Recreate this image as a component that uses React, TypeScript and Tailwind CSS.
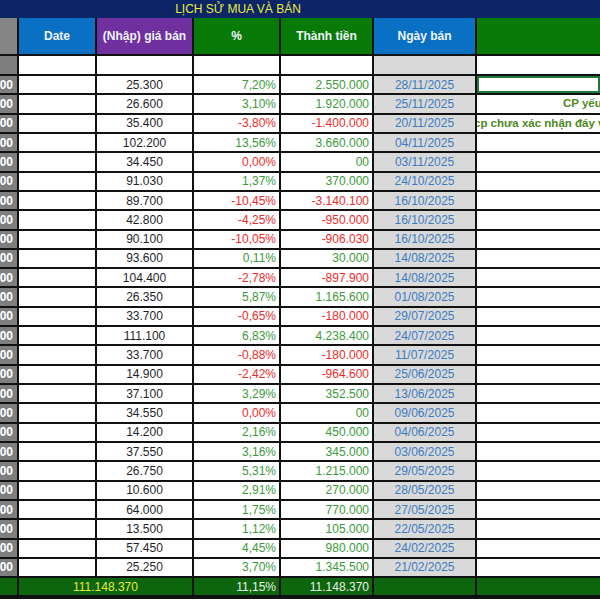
type Row = {
  a: string;
  price: string;
  pct: string;
  amount: string;
  date: string;
};

const ROWS: Row[] = [
  { a: "1.000", price: "25.300", pct: "7,20%", amount: "2.550.000", date: "28/11/2025" },
  { a: "2.000", price: "26.600", pct: "3,10%", amount: "1.920.000", date: "25/11/2025" },
  { a: "1.000", price: "35.400", pct: "-3,80%", amount: "-1.400.000", date: "20/11/2025" },
  { a: "1.000", price: "102.200", pct: "13,56%", amount: "3.660.000", date: "04/11/2025" },
  { a: "1.000", price: "34.450", pct: "0,00%", amount: "00", date: "03/11/2025" },
  { a: "1.000", price: "91.030", pct: "1,37%", amount: "370.000", date: "24/10/2025" },
  { a: "3.000", price: "89.700", pct: "-10,45%", amount: "-3.140.100", date: "16/10/2025" },
  { a: "1.000", price: "42.800", pct: "-4,25%", amount: "-950.000", date: "16/10/2025" },
  { a: "1.000", price: "90.100", pct: "-10,05%", amount: "-906.030", date: "16/10/2025" },
  { a: "1.000", price: "93.600", pct: "0,11%", amount: "30.000", date: "14/08/2025" },
  { a: "1.000", price: "104.400", pct: "-2,78%", amount: "-897.900", date: "14/08/2025" },
  { a: "1.000", price: "26.350", pct: "5,87%", amount: "1.165.600", date: "01/08/2025" },
  { a: "1.000", price: "33.700", pct: "-0,65%", amount: "-180.000", date: "29/07/2025" },
  { a: "1.000", price: "111.100", pct: "6,83%", amount: "4.238.400", date: "24/07/2025" },
  { a: "1.000", price: "33.700", pct: "-0,88%", amount: "-180.000", date: "11/07/2025" },
  { a: "1.000", price: "14.900", pct: "-2,42%", amount: "-964.600", date: "25/06/2025" },
  { a: "1.000", price: "37.100", pct: "3,29%", amount: "352.500", date: "13/06/2025" },
  { a: "1.000", price: "34.550", pct: "0,00%", amount: "00", date: "09/06/2025" },
  { a: "1.000", price: "14.200", pct: "2,16%", amount: "450.000", date: "04/06/2025" },
  { a: "1.000", price: "37.550", pct: "3,16%", amount: "345.000", date: "03/06/2025" },
  { a: "1.000", price: "26.750", pct: "5,31%", amount: "1.215.000", date: "29/05/2025" },
  { a: "1.000", price: "10.600", pct: "2,91%", amount: "270.000", date: "28/05/2025" },
  { a: "1.000", price: "64.000", pct: "1,75%", amount: "770.000", date: "27/05/2025" },
  { a: "1.000", price: "13.500", pct: "1,12%", amount: "105.000", date: "22/05/2025" },
  { a: "1.000", price: "57.450", pct: "4,45%", amount: "980.000", date: "24/02/2025" },
  { a: "1.000", price: "25.250", pct: "3,70%", amount: "1.345.500", date: "21/02/2025" },
];

const GRID = "grid grid-cols-[17px_76px_95px_85px_91px_101px_1fr] gap-x-[2px]";

// 0,00% shows red in the sheet, the matching "00" amount stays green
const isNeg = (v: string) => v.startsWith("-") || v === "0,00%";

const DataRow = ({ row, index }: { row: Row; index: number }) => (
  <div className={`${GRID} h-[17.32px] text-[12px] leading-none`}>
    <div className="flex items-center justify-end overflow-hidden whitespace-nowrap bg-[#7f7f7f] pr-[4px] font-bold text-white">
      {row.a}
    </div>
    <div className="bg-white" />
    <div className="flex items-center justify-center bg-white text-[#1f1f2a]">
      {row.price}
    </div>
    <div
      className={`flex items-center justify-end bg-white pr-[3px] ${
        isNeg(row.pct) ? "text-[#ee2b2b]" : "text-[#3c9a3c]"
      }`}
    >
      {row.pct}
    </div>
    <div
      className={`flex items-center justify-end bg-white pr-[3px] ${
        row.amount.startsWith("-") ? "text-[#ee2b2b]" : "text-[#3c9a3c]"
      }`}
    >
      {row.amount}
    </div>
    <div className="flex items-center justify-center bg-[#d9d9d9] text-[#3d7bbf]">
      {row.date}
    </div>
    <div
      className={`flex items-center overflow-hidden whitespace-nowrap bg-white text-[11.5px] font-bold text-[#4c8a1e] ${
        index === 0 ? "shadow-[inset_0_0_0_2px_#1f7a3c]" : ""
      }`}
    >
      {index === 1 && <span className="pl-[86px]">CP yếu kém</span>}
      {index === 2 && <span className="ml-[-3px]">cp chưa xác nhận đáy vượt</span>}
    </div>
  </div>
);

export default function App() {
  return (
    <div
      className="h-[600px] w-[600px] overflow-hidden bg-white"
      style={{ fontFamily: '"Liberation Sans", Arial, sans-serif' }}
    >
      <div className="flex h-[18px] bg-[#0b2566]">
        <div className="flex w-[476px] items-center justify-center text-[12px] text-[#e9ec3c]">
          LỊCH SỬ MUA VÀ BÁN
        </div>
      </div>
      <div className="flex flex-col gap-y-[2px] bg-[#111]">
        <div className={`${GRID} h-[36px] text-[12px] font-bold text-[#eef4fa]`}>
          <div className="bg-[#858585]" />
          <div className="flex items-center justify-center bg-[#0a70c4]">Date</div>
          <div className="flex items-center justify-center bg-[#7030a0]">(Nhập) giá bán</div>
          <div className="flex items-center justify-center bg-[#087a08]">%</div>
          <div className="flex items-center justify-center bg-[#087a08]">Thành tiền</div>
          <div className="flex items-center justify-center bg-[#0a70c4]">Ngày bán</div>
          <div className="bg-[#087a08]" />
        </div>
        <div className={`${GRID} h-[18px]`}>
          <div className="bg-[#7f7f7f]" />
          <div className="bg-white" />
          <div className="bg-white" />
          <div className="bg-white" />
          <div className="bg-white" />
          <div className="bg-[#d9d9d9]" />
          <div className="bg-white" />
        </div>
        {ROWS.map((row, i) => (
          <DataRow key={i} row={row} index={i} />
        ))}
        <div className={`${GRID} h-[17.32px] text-[12px] leading-none`}>
          <div className="bg-[#0d650d]" />
          <div className="col-span-2 flex items-center justify-center bg-[#0d650d] text-[#e4ee3a]">
            111.148.370
          </div>
          <div className="flex items-center justify-end bg-[#0d650d] pr-[3px] text-[#eaf2ea]">
            11,15%
          </div>
          <div className="flex items-center justify-end bg-[#0d650d] pr-[3px] text-[#eaf2ea]">
            11.148.370
          </div>
          <div className="bg-[#0d650d]" />
          <div className="bg-[#0d650d]" />
        </div>
        <div className="h-[2px]" />
      </div>
    </div>
  );
}
